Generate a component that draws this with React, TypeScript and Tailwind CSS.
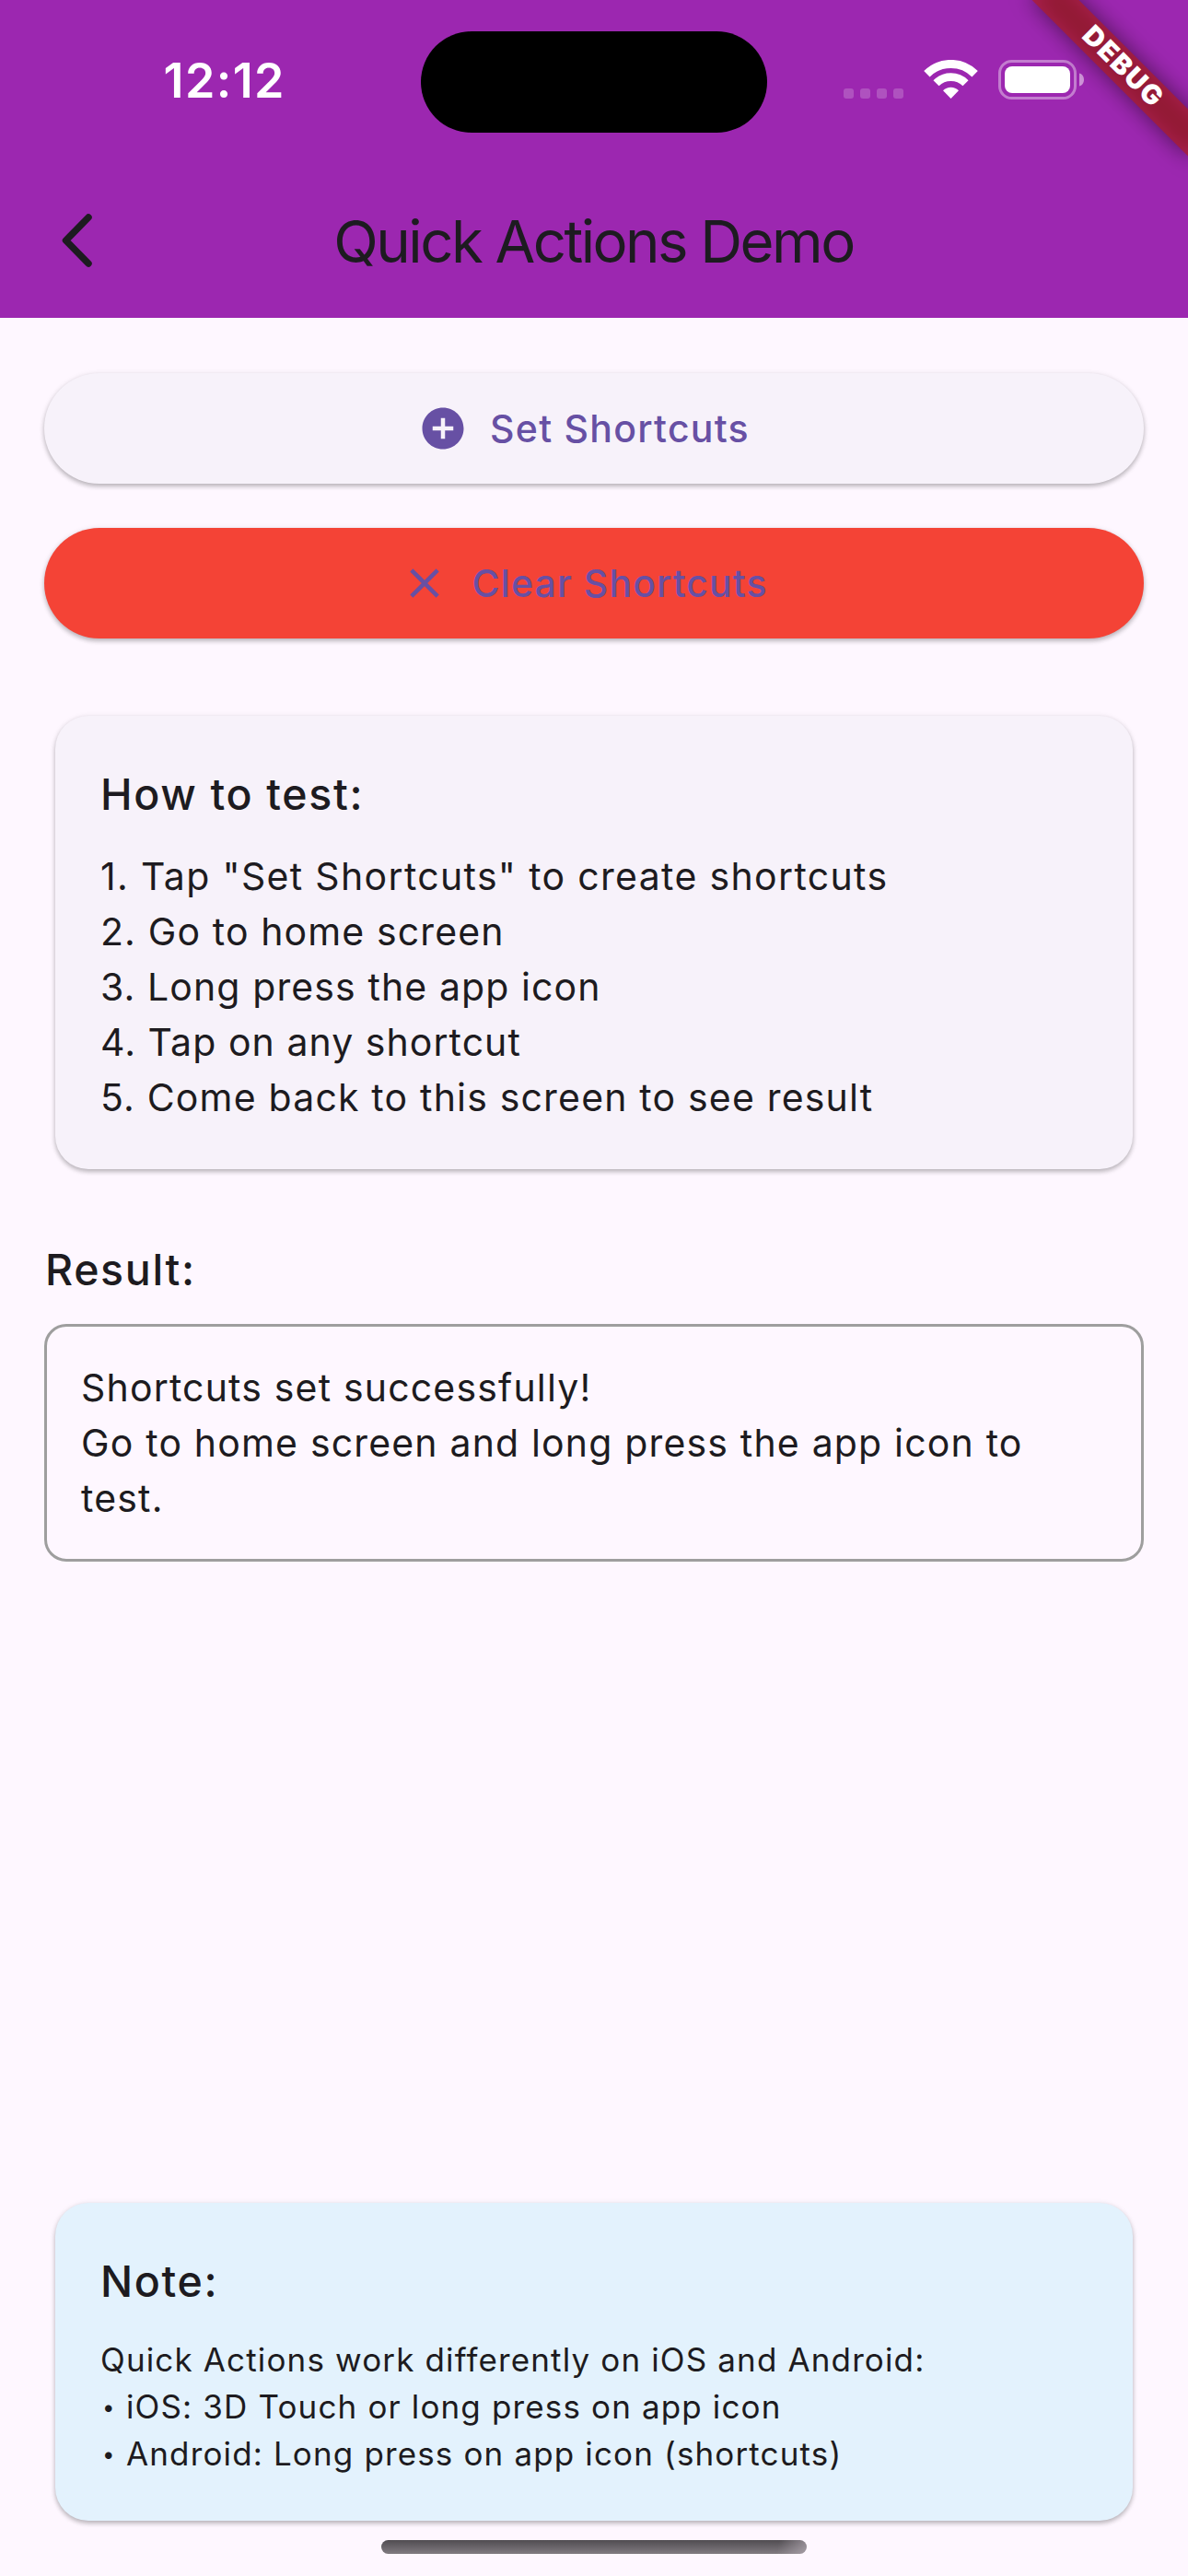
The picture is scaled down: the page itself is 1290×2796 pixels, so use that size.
import type { ReactNode } from "react";
import { MdAddCircle, MdClear } from "react-icons/md";

const steps = [
  { text: '1. Tap "Set Shortcuts" to create shortcuts', tracking: "tracking-[1.33px]" },
  { text: "2. Go to home screen", tracking: "tracking-[1.12px]" },
  { text: "3. Long press the app icon", tracking: "tracking-[1.1px]" },
  { text: "4. Tap on any shortcut", tracking: "tracking-[1.05px]" },
  { text: "5. Come back to this screen to see result", tracking: "tracking-[1.18px]" },
];

const cardShadow = "shadow-[0_3px_5px_rgba(0,0,0,0.22),0_1px_6px_rgba(0,0,0,0.1)]";

function StatusBar() {
  return (
    <div className="flex h-[177px] items-start">
      <div className="flex h-[177px] w-[457px] items-start pl-[177.5px] pt-[58px] text-[52px] font-semibold leading-[60px] tracking-[1.4px] text-white">
        12:12
      </div>
      <div className="mt-[34px] h-[110px] w-[376px] rounded-full bg-black" />
      <div className="ml-[83px] mt-[65px] flex h-[43px] items-start">
        <div className="mt-[31px] flex gap-[7px]">
          {[0, 1, 2, 3].map((dot) => (
            <div key={dot} className="size-[11px] rounded-[3px] bg-white/20" />
          ))}
        </div>
        <svg className="ml-[22px] h-[43px] w-[59px]" viewBox="0 0 59 43" fill="none" stroke="#fff">
          <path d="M3.4 15.2 A37 37 0 0 1 55.6 15.2" strokeWidth="9" />
          <path d="M13.5 25.3 A22.6 22.6 0 0 1 45.5 25.3" strokeWidth="8.6" />
          <path d="M29.5 42 L21 33.2 A12 12 0 0 1 38 33.2 Z" fill="#fff" stroke="none" />
        </svg>
        <svg className="ml-[22px] h-[43px] w-[94px]" viewBox="0 0 94 43" fill="none">
          <rect x="1.5" y="1.5" width="82" height="40" rx="13" stroke="#fff" strokeOpacity="0.4" strokeWidth="3" />
          <rect x="7" y="7" width="71" height="29" rx="8" fill="#fff" />
          <path d="M88 14.5 C91.5 15.5 93 18.5 93 21.5 C93 24.5 91.5 27.5 88 28.5 Z" fill="#fff" fillOpacity="0.5" />
        </svg>
      </div>
    </div>
  );
}

function DebugBanner() {
  return (
    <div className="pointer-events-none absolute right-0 top-0 size-[240px] overflow-hidden">
      <div className="absolute left-[48px] top-[54px] h-[36px] w-[240px] rotate-45">
        <div className="absolute inset-0 bg-black/50 blur-[12px]" />
        <div className="absolute inset-0 flex items-center justify-center bg-[#b71c1c]/63 pb-[2px] pl-[3px] text-[29.5px] font-black leading-none tracking-[1.6px] text-white">
          DEBUG
        </div>
      </div>
    </div>
  );
}

function ActionButton({ icon, label, className }: { icon: ReactNode; label: string; className: string }) {
  return (
    <button
      className={`flex h-[120px] w-full items-center justify-center gap-[24px] rounded-full pl-[49px] pr-[71px] text-[41px] font-medium leading-[60px] text-[#6750a4] ${cardShadow} ${className}`}
    >
      {icon}
      <span>{label}</span>
    </button>
  );
}

function Card({ title, className, children }: { title: string; className: string; children: ReactNode }) {
  return (
    <section className={`mx-[12px] rounded-[36px] p-[48px] pl-[49px] ${cardShadow} ${className}`}>
      <h2 className="pt-[1px] text-[46.5px] font-medium leading-[73px] tracking-[1.65px]">{title}</h2>
      <div className="mt-[22px]">{children}</div>
    </section>
  );
}

function Bullet({ children }: { children: ReactNode }) {
  return (
    <li className="flex">
      <span className="w-[28px] pl-[2px] text-[24px]">•</span>
      <span>{children}</span>
    </li>
  );
}

export default function App() {
  return (
    <div className="relative flex h-[2796px] w-[1290px] flex-col overflow-hidden bg-[#fef7ff] font-['Inter',sans-serif] text-[#1d1b20]">
      <header className="h-[345px] shrink-0 bg-[#9c27b0]">
        <StatusBar />
        <div className="flex h-[168px] items-center">
          <svg className="ml-[60px] h-[66px] w-[48px] shrink-0" viewBox="0 0 48 66" fill="none">
            <path d="M36 8 L11.5 33 L36 58" stroke="#1d1b20" strokeWidth="7.5" strokeLinecap="round" strokeLinejoin="round" />
          </svg>
          <h1 className="mr-[109px] flex-1 pt-[2px] text-center text-[63.5px] font-normal leading-[84px] tracking-[-2.55px]">
            Quick Actions Demo
          </h1>
        </div>
      </header>

      <main className="flex flex-1 flex-col px-[48px] pt-[60px]">
        <ActionButton
          icon={<MdAddCircle className="size-[54px]" />}
          label="Set Shortcuts"
          className="bg-[#f7f2fa] tracking-[1.26px]"
        />
        <ActionButton
          icon={<MdClear className="size-[54px]" />}
          label="Clear Shortcuts"
          className="mt-[48px] bg-[#f44336] tracking-[1.08px]"
        />

        <Card title="How to test:" className="mt-[84px] bg-[#f7f2fa]">
          <ol className="text-[41px] leading-[60px]">
            {steps.map((step) => (
              <li key={step.text} className={step.tracking}>
                {step.text}
              </li>
            ))}
          </ol>
        </Card>

        <h2 className="mt-[72px] pl-[1px] text-[46.5px] font-medium leading-[74px] tracking-[1.65px]">Result:</h2>
        <div className="mt-[22px] rounded-[24px] border-[3px] border-[#9e9e9e] p-[36px] pl-[37px] text-[41px] leading-[60px] tracking-[1.17px]">
          <p>Shortcuts set successfully!</p>
          <p>Go to home screen and long press the app icon to test.</p>
        </div>

        <Card title="Note:" className="mb-[20px] mt-auto bg-[#e3f2fd]">
          <div className="relative top-px text-[35px] leading-[51px] tracking-[1.14px]">
            <p>Quick Actions work differently on iOS and Android:</p>
            <ul>
              <Bullet>iOS: 3D Touch or long press on app icon</Bullet>
              <Bullet>Android: Long press on app icon (shortcuts)</Bullet>
            </ul>
          </div>
        </Card>
      </main>

      <footer className="flex h-[40px] shrink-0 justify-center">
        <div className="mt-[1px] h-[15px] w-[462px] rounded-full bg-[linear-gradient(100deg,transparent_93%,rgba(190,180,190,0.6)),linear-gradient(to_bottom,#504c51,#817b81)]" />
      </footer>

      <DebugBanner />
    </div>
  );
}
